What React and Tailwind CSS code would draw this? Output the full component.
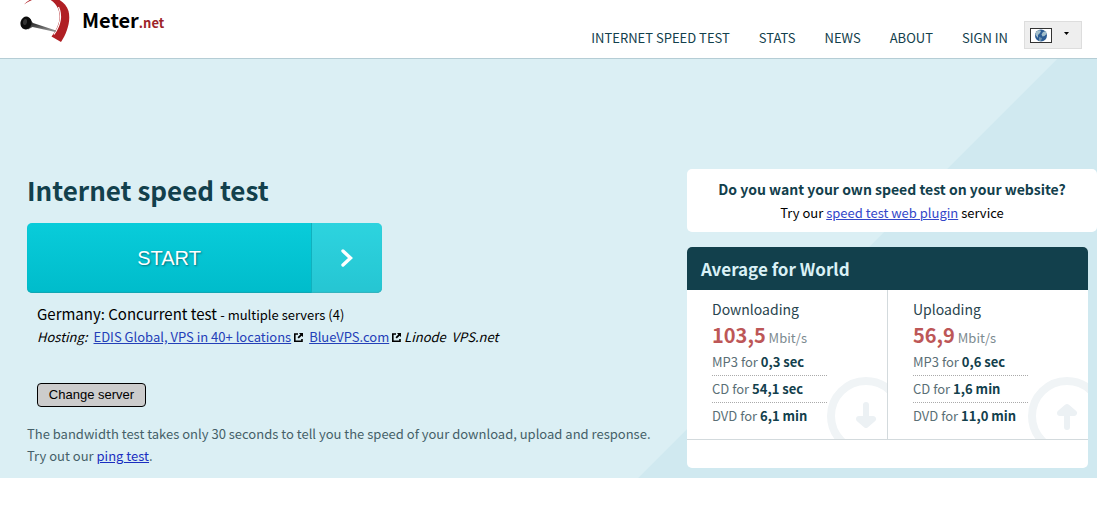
import React from "react";

const navItems = ["Internet speed test", "Stats", "News", "About", "Sign in"];

const averages = [
  {
    label: "Downloading",
    value: "103,5",
    direction: "down",
    rows: [
      ["MP3 for", "0,3 sec"],
      ["CD for", "54,1 sec"],
      ["DVD for", "6,1 min"],
    ],
  },
  {
    label: "Uploading",
    value: "56,9",
    direction: "up",
    rows: [
      ["MP3 for", "0,6 sec"],
      ["CD for", "1,6 min"],
      ["DVD for", "11,0 min"],
    ],
  },
];

const LogoIcon = () => (
  <svg width="50" height="42" viewBox="0 0 50 42" aria-hidden="true">
    <defs>
      <linearGradient id="needle" x1="0" y1="0" x2="0.3" y2="1">
        <stop offset="0" stopColor="#777" />
        <stop offset="0.5" stopColor="#333" />
        <stop offset="1" stopColor="#888" />
      </linearGradient>
    </defs>
    {/* dial */}
    <path d="M4 4.500C9-1 17-4 27-4c11 1 19 7 21.500 15C51 21 47 33 41 42l-9.500-5.500C38 28 42 18 38 8.500 36 4 33 1 28-1.500 20-3 11-1 4 4.500z" fill="#b01f24" />
    <path d="M38.500 7c4 9 2 18-4.500 27.500" fill="none" stroke="#fff" strokeWidth="1.2" />
    {/* needle */}
    <path d="M7 16.500c3 1 3.500 4 6 6.500l23 7.500-.5 1.500-23-5-4.500 2.500z" fill="url(#needle)" />
    <ellipse cx="6" cy="23" rx="5.500" ry="6.500" fill="#0c0c0c" transform="rotate(12 6 23)" />
    <ellipse cx="5" cy="22" rx="2" ry="3" fill="#333" transform="rotate(12 5 22)" />
  </svg>
);

const GlobeFlag = () => (
  <svg width="22" height="15" viewBox="0 0 22 15" aria-hidden="true">
    <rect x="0.5" y="0.5" width="21" height="14" fill="#fff" stroke="#333" />
    <circle cx="11" cy="7.5" r="6" fill="#2c5c94" />
    <path d="M6 4c2-2 4-2 5-1l-1 2-2 2v3L5.500 7zM13 4l3-1 .5 3-2 2-2 .5-1-2z" fill="#a3bfcc" />
    <path d="M9 9l3 1-1 3H9z" fill="#6f93ad" />
  </svg>
);

const ExternalIcon = () => (
  <svg className="inline-block align-baseline" width="9" height="9" viewBox="0 0 9 9" aria-hidden="true">
    <path d="M4 1H.8v7.200H8V6" fill="none" stroke="#000" strokeWidth="1.6" />
    <path d="M5 0h4v4L7.600 2.700 4.800 5.500 3.500 4.200 6.300 1.400z" fill="#000" />
  </svg>
);

const Watermark = ({ direction }) => (
  <svg className="absolute right-0 bottom-0" width="61" height="62" viewBox="0 0 61 62" aria-hidden="true">
    <circle cx="40" cy="39" r="35" fill="none" stroke="#f0f4f6" strokeWidth="8" />
    {direction === "down" ? (
      <path d="M40 28v14M33 42l7 6 7-6z" fill="#ecf1f4" stroke="#ecf1f4" strokeWidth="6" strokeLinejoin="round" strokeLinecap="round" />
    ) : (
      <path d="M40 50V36M33 36l7-6 7 6z" fill="#ecf1f4" stroke="#ecf1f4" strokeWidth="6" strokeLinejoin="round" strokeLinecap="round" />
    )}
  </svg>
);

const Header = () => (
  <header className="flex h-[59px] items-start justify-between border-b border-[#b5cdd5] bg-white pl-5 pr-[15px]">
    <a href="#" className="flex items-start gap-3">
      <LogoIcon />
      <span className="pt-2 text-xl leading-6 font-bold text-black">
        Meter<span className="text-[13px] text-[#9d2429]">.net</span>
      </span>
    </a>
    <div className="flex items-start gap-4 pt-[21px]">
      <nav className="flex gap-[29px] pt-[7px]">
        {navItems.map((item) => (
          <a key={item} href="#" className="text-[13px] leading-5 text-[#12404c] uppercase">
            {item}
          </a>
        ))}
      </nav>
      <button
        type="button"
        aria-label="Language"
        className="flex h-7 w-[58px] items-center gap-3 border border-[#ddd] bg-[#eee] pl-[5px]"
      >
        <GlobeFlag />
        <svg width="5" height="8" viewBox="0 0 5 8" aria-hidden="true">
          <path d="M0 1h5L2.500 4z" fill="#000" />
        </svg>
      </button>
    </div>
  </header>
);

const AverageColumn = ({ label, value, direction, rows }) => (
  <div className="relative h-[149px] flex-1 overflow-hidden pt-2 pl-[25px]">
    <Watermark direction={direction} />
    <h3 className="text-sm leading-[22px] text-[#28444d]">{label}</h3>
    <p className="pt-[3px] text-[13px] leading-[23px] text-[#7c8a90]">
      <strong className="text-xl leading-[23px] text-[#bd5757]">{value}</strong> Mbit/s
    </p>
    <ul className="w-[115px] divide-y divide-dotted divide-[#aaa] text-[13px] leading-[26px] text-[#5b6f76]">
      {rows.map(([name, time]) => (
        <li key={name} className="whitespace-nowrap">
          {name} <strong className="text-[#12404c]">{time}</strong>
        </li>
      ))}
    </ul>
  </div>
);

const App = () => {
  return (
    <div className="bg-white font-['Noto_Sans_CJK_SC',sans-serif]">
      <Header />
      <main className="flex items-start justify-between bg-[linear-gradient(135deg,#dbeff4_747px,#d0e9f0_748px)] pt-[110px] pb-[10px] pl-[27px]">
        <section className="flex-1">
          <h1 className="pt-[3px] text-[26px] leading-9 font-bold text-[#12404c]">Internet speed test</h1>
          <button
            type="button"
            className="mt-[15px] flex h-[70px] w-[355px] overflow-hidden rounded-[5px] bg-linear-to-b from-[#09ccda] to-[#00bccb] font-['Liberation_Sans',sans-serif] text-xl text-white shadow-[inset_0_-1px_1px_#12a5b1]"
          >
            <span className="flex h-full flex-1 items-center justify-center [text-shadow:1px_1px_2px_#00707a]">START</span>
            <span className="flex h-full w-[71px] items-center justify-center border-l border-[#0fb1be] bg-white/15">
              <svg width="14" height="20" viewBox="0 0 14 20" aria-hidden="true">
                <path d="M3 3l7.500 7L3 17" fill="none" stroke="#fff" strokeWidth="3.400" strokeLinecap="round" />
              </svg>
            </span>
          </button>
          <div className="mt-[10px] pl-[10px] text-black">
            <p className="text-[15px] leading-[22px]">
              Germany: Concurrent test <span className="text-[13px]">- multiple servers (4)</span>
            </p>
            <p className="flex gap-1.5 text-[13px] leading-[22px]">
              <em>Hosting:</em>
              <span>
                <a href="#" className="text-[#2440b8] underline">EDIS Global, VPS in 40+ locations</a> <ExternalIcon />
              </span>
              <span>
                <a href="#" className="text-[#2440b8] underline">BlueVPS.com</a> <ExternalIcon /> <em>Linode&nbsp; VPS.net</em>
              </span>
            </p>
            <button
              type="button"
              className="mt-[35px] h-6 w-[109px] rounded-[4px] border border-black bg-[#ccc] font-['Liberation_Sans',sans-serif] text-[13px] leading-5"
            >
              Change server
            </button>
          </div>
          <p className="mt-4 text-[13px] leading-[22px] text-[#455f68]">
            The bandwidth test takes only 30 seconds to tell you the speed of your download, upload and response.
            <br />
            Try out our <a href="#" className="text-[#1a2ec0] underline">ping test</a>.
          </p>
        </section>

        <aside className="w-[410px] shrink-0">
          <div className="rounded-[5px] bg-white pt-2 pb-[7px] text-center">
            <h2 className="text-sm leading-6 font-bold text-[#12404c]">Do you want your own speed test on your website?</h2>
            <p className="text-[13px] leading-6 text-black">
              Try our <a href="#" className="text-[#3347c9] underline">speed test web plugin</a> service
            </p>
          </div>
          <div className="mt-[15px] mr-[9px] overflow-hidden rounded-[5px] bg-white pb-7">
            <h2 className="bg-[#12404c] px-[14px] text-[17px] leading-[43px] font-bold text-[#d9f1f6]">Average for World</h2>
            <div className="flex divide-x divide-[#d3dadd] border-b border-[#d3dadd]">
              {averages.map((item) => (
                <AverageColumn key={item.label} {...item} />
              ))}
            </div>
          </div>
        </aside>
      </main>
    </div>
  );
};

export default App;
